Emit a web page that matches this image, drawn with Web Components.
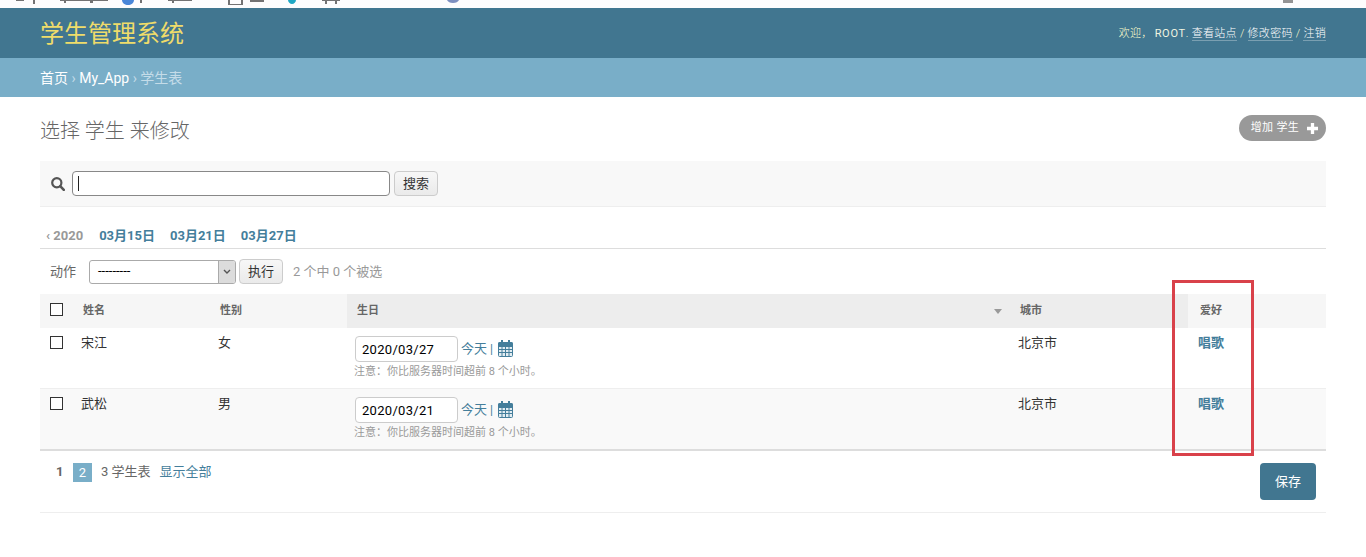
<!DOCTYPE html>
<html lang="zh">
<head>
<meta charset="utf-8">
<title>学生表</title>
<style>
  html, body { margin: 0; background: #fff; }
  body {
    font-family: Roboto, "Liberation Sans", "Noto Sans CJK SC", sans-serif;
    color: #333;
    font-size: 13px;
    height: 557px;
    overflow: hidden;
  }
</style>
</head>
<body>
<admin-page>
  <browser-strip></browser-strip>
  <admin-header title-text="学生管理系统"></admin-header>
  <admin-crumbs></admin-crumbs>
  <change-list></change-list>
</admin-page>

<script>
const CJK = 'Roboto, "Liberation Sans", "Noto Sans CJK SC", sans-serif';

class AdminPage extends HTMLElement {
  constructor() {
    super();
    this.attachShadow({ mode: 'open' }).innerHTML = `
      <style>
        :host { display: flex; flex-direction: column; position: relative; height: 557px; }
      </style>
      <slot></slot>
      <red-box></red-box>`;
  }
}

// the bottom edge of the browser's bookmarks bar, cut off by the screenshot: only specks are left
class BrowserStrip extends HTMLElement {
  constructor() {
    super();
    this.attachShadow({ mode: 'open' }).innerHTML = `
      <style>
        :host { display: block; height: 8px; background: #fdfcfd; }
        svg { display: block; }
      </style>
      <svg width="1366" height="8" viewBox="0 0 1366 8">
        <path d="M16 0H24V1H16ZM33 0H35V4H33ZM60 0H108V1H60ZM64 1H66V3H64ZM90 1H93V3H90ZM140 0H142V3H140ZM168 0H192V1H168ZM172 1H174V3H172ZM228 0H243V5H228ZM230 0H241V4H230ZM250 0H264V2H250ZM322 0H340V1H322ZM325 1H327V4H325ZM335 1H337V4H335Z" fill="#444" opacity=".75"/>
        <path d="M230 0H241V4H230Z" fill="#fdfcfd"/>
        <path d="M122 0H134C134 3 131 5 128 5C125 5 122 3 122 0Z" fill="#4a86d8"/>
        <path d="M288 0H296C296 2 294 4 292 4C290 4 288 2 288 0Z" fill="#1fa7c4"/>
        <path d="M447 0H459C458 2 456 3 453 3C450 3 448 2 447 0Z" fill="#7d8fc0"/>
        <path d="M1283 0H1293V3H1283Z" fill="#666" opacity=".7"/>
      </svg>`;
  }
}

class AdminHeader extends HTMLElement {
  constructor() {
    super();
    this.attachShadow({ mode: 'open' }).innerHTML = `
      <style>
        :host { display: flex; height: 50px; background: #417690; padding: 0 40px; justify-content: space-between; align-items: flex-start; box-sizing: border-box; }
        h1 { margin: 9px 0 0; font: 400 24px/34px ${CJK}; color: #efdc6a; }
        .tools { margin-top: 18px; font: 300 11px/16px ${CJK}; color: #ffc; letter-spacing: 0.3px; }
        .tools b { font-weight: 400; color: #f0f4e0; margin-left: 2px; letter-spacing: .7px; }
        a { color: #fff; text-decoration: none; border-bottom: 1px solid rgba(255,255,255,.3); }
      </style>
      <h1></h1>
      <div class="tools">欢迎，<b>ROOT</b>. <a>查看站点</a> / <a>修改密码</a> / <a>注销</a></div>`;
    this.shadowRoot.querySelector('h1').textContent = this.getAttribute('title-text');
  }
}

class AdminCrumbs extends HTMLElement {
  constructor() {
    super();
    this.attachShadow({ mode: 'open' }).innerHTML = `
      <style>
        :host { display: block; height: 39px; background: #79aec8; padding: 0 40px; font: 14px/40px ${CJK}; color: #c4dce8; box-sizing: border-box; white-space: nowrap; }
        a { color: #fff; }
      </style>
      <a>首页</a> › <a>My_App</a> › 学生表`;
  }
}

class RedBox extends HTMLElement {
  constructor() {
    super();
    this.attachShadow({ mode: 'open' }).innerHTML = `
      <style>
        :host { position: absolute; left: 1172px; top: 280px; width: 82px; height: 176px; border: 3px solid #d9414a; box-sizing: border-box; }
      </style>`;
  }
}

class DateField extends HTMLElement {
  constructor() {
    super();
    this.attachShadow({ mode: 'open' }).innerHTML = `
      <style>
        :host { display: block; font: 13px/16px ${CJK}; padding-top: 8px; }
        .row { display: flex; align-items: center; height: 26px; }
        .box { width: 103px; height: 26px; box-sizing: border-box; border: 1px solid #ccc; border-radius: 4px; padding: 0 6px; font: 13px/25px ${CJK}; color: #000; background: #fff; letter-spacing: 0.3px; }
        a { color: #447e9b; margin-left: 3px; font-size: 13px; }
        .bar { color: #447e9b; margin: 0 5px 0 3px; font-size: 12px; }
        svg { display: block; margin-top: -1px; }
        p { margin: 3px 0 0 -1px; font: 11px/14px ${CJK}; color: #999; white-space: nowrap; }
      </style>
      <div class="row">
        <div class="box"></div>
        <a>今天</a><span class="bar">|</span>
        <svg width="15" height="17" viewBox="0 0 15 17" fill="none" stroke="#447e9b">
          <rect x="0.5" y="2.5" width="14" height="14" rx="1" fill="#e3edf2"/>
          <path d="M0.5 6.5H14.5M0.5 9.5H14.5M0.5 12.5H14.5M4 6V16M7.5 6V16M11 6V16" stroke-width="1"/>
          <path d="M0.5 3.5Q0.5 2.5 1.5 2.5H13.5Q14.5 2.5 14.5 3.5V6H0.5Z" fill="#447e9b"/>
          <path d="M4 0V3.5M11 0V3.5" stroke-width="2"/>
        </svg>
      </div>
      <p>注意：你比服务器时间超前 8 个小时。</p>`;
    this.shadowRoot.querySelector('.box').textContent = this.getAttribute('value');
  }
}

class CheckMark extends HTMLElement {
  constructor() {
    super();
    this.attachShadow({ mode: 'open' }).innerHTML = `
      <style>
        :host { display: block; width: 13px; height: 13px; box-sizing: border-box; border: 1px solid #333; background: #fff; }
      </style>`;
  }
}

const template = document.createElement('template');
template.innerHTML = `
  <style>
    :host { display: block; padding: 0 40px; font: 13px/16px ${CJK}; }
    .title { display: flex; justify-content: space-between; align-items: flex-start; height: 64px; }
    h1 { margin: 21px 0 0; font: 300 20px/26px ${CJK}; color: #666; }
    .add { margin-top: 18px; height: 26px; border-radius: 13px; background: #999; color: #fff; font: 11px/26px ${CJK}; padding: 0 8px 0 12px; display: flex; align-items: center; gap: 8px; letter-spacing: .3px; }
    .search { background: #f8f8f8; border-bottom: 1px solid #eee; display: flex; align-items: center; padding-left: 11px; box-sizing: border-box; height: 46px; }
    .search svg { margin-right: 7px; }
    .q { width: 318px; height: 25px; box-sizing: border-box; border: 1px solid #888; border-radius: 4px; background: #fff; display: flex; align-items: center; padding-left: 5px; }
    .q i { width: 1px; height: 15px; background: #222; }
    .btn { height: 25px; box-sizing: border-box; border: 1px solid #ccc; border-radius: 4px; background: linear-gradient(#f7f7f7, #eaeaea); font: 13px/23px ${CJK}; color: #333; padding: 0 6px; text-align: center; }
    .search .btn { margin-left: 4px; width: 44px; padding: 0; }
    .dates { display: flex; height: 42px; box-sizing: border-box; border-bottom: 1px solid #ddd; padding: 22px 0 0 6px; font: 700 13px/14px ${CJK}; color: #447e9b; gap: 15px; }
    .dates span { color: #999; margin-right: 1px; }
    .actions { display: flex; align-items: center; height: 45px; padding: 0 10px; color: #666; box-sizing: border-box; }
    .sel { width: 147px; height: 24px; box-sizing: border-box; margin-left: 13px; border: 1px solid #aaa; border-radius: 3px; background: #fff; display: flex; justify-content: space-between; font: 13px/20px ${CJK}; color: #000; padding-left: 8px; overflow: hidden; }
    .sel u { width: 16px; background: #dcdcdc; border-left: 1px solid #aaa; display: flex; align-items: center; justify-content: center; text-decoration: none; }
    .actions .btn { margin-left: 3px; width: 44px; padding: 0; }
    .count { margin-left: 10px; color: #999; }
    .grid { display: grid; grid-template-columns: 31px 137px 139px 661px 180px 1fr; }
    .head { height: 34px; background: #f6f6f6; font: 700 11px/16px ${CJK}; color: #666; display: flex; align-items: center; padding-left: 12px; box-sizing: border-box; }
    .head.sorted { background: #ededed; padding-left: 10px; justify-content: space-between; }
    .head.city { background: #ededed; }
    .head.box { padding: 0 0 4px 10px; }
    .head.sorted i { width: 0; height: 0; border: 4px solid transparent; border-top: 5px solid #999; margin: 5px 6px 0 0; }
    .cell { height: 61px; box-sizing: border-box; padding: 7px 0 0 10px; border-bottom: 1px solid #eee; font: 13px/16px ${CJK}; color: #333; }
    .row2 { background: #f9f9f9; border-bottom: 2px solid #ddd; height: 62px; }
    .cell.box { padding-top: 8px; }
    .cell.date { padding: 0 0 0 8px; }
    .cell a { color: #447e9b; font-weight: 700; }
    .foot { display: flex; justify-content: space-between; height: 62px; box-sizing: border-box; border-bottom: 1px solid #eee; }
    .pages { display: flex; align-items: flex-start; padding: 11px 0 0 16px; color: #666; line-height: 20px; }
    .pages b { color: #666; font-weight: 700; width: 9px; }
    .pages .cur { width: 19px; height: 19px; background: #79aec8; color: #fff; text-align: center; margin: 1px 9px 0 8px; line-height: 19px; }
    .pages a { color: #447e9b; margin-left: 9px; }
    .save { margin: 12px 10px 0 0; width: 56px; height: 37px; border-radius: 4px; background: #417690; color: #fff; font: 13px/37px ${CJK}; text-align: center; }
  </style>
  <div class="title">
    <h1>选择 学生 来修改</h1>
    <div class="add">增加 学生
      <svg width="11" height="11" viewBox="0 0 10 10"><path d="M3.5 0H6.5V3.5H10V6.5H6.5V10H3.5V6.5H0V3.5H3.5Z" fill="#fff"/></svg>
    </div>
  </div>
  <div class="search">
    <svg width="14" height="14" viewBox="0 0 14 14" fill="none" stroke="#555">
      <circle cx="5.8" cy="5.8" r="4.6" stroke-width="2.2"/>
      <path d="M9.2 9.2L12.8 12.8" stroke-width="2.6" stroke-linecap="round"/>
    </svg>
    <div class="q"><i></i></div>
    <div class="btn">搜索</div>
  </div>
  <div class="dates"><span>‹ 2020</span><a>03月15日</a><a>03月21日</a><a>03月27日</a></div>
  <div class="actions">
    动作
    <div class="sel">---------<u><svg width="8" height="6" viewBox="0 0 8 6" fill="none" stroke="#555" stroke-width="1.4"><path d="M1 1L4 4L7 1"/></svg></u></div>
    <div class="btn">执行</div>
    <span class="count">2 个中 0 个被选</span>
  </div>
  <div class="grid" id="grid">
    <div class="head box"><check-mark></check-mark></div>
    <div class="head">姓名</div>
    <div class="head">性别</div>
    <div class="head sorted"><span>生日</span><i></i></div>
    <div class="head city">城市</div>
    <div class="head">爱好</div>
  </div>
  <div class="foot">
    <div class="pages"><b>1</b><span class="cur">2</span>3 学生表<a>显示全部</a></div>
    <div class="save">保存</div>
  </div>`;

class ChangeList extends HTMLElement {
  constructor() {
    super();
    const root = this.attachShadow({ mode: 'open' });
    root.appendChild(template.content.cloneNode(true));
    const rows = [
      { name: '宋江', sex: '女', date: '2020/03/27', city: '北京市', hobby: '唱歌' },
      { name: '武松', sex: '男', date: '2020/03/21', city: '北京市', hobby: '唱歌' },
    ];
    const grid = root.getElementById('grid');
    rows.forEach((r, i) => {
      const cls = i === 1 ? 'cell row2' : 'cell';
      grid.insertAdjacentHTML('beforeend', `
        <div class="${cls} box"><check-mark></check-mark></div>
        <div class="${cls} name">${r.name}</div>
        <div class="${cls}">${r.sex}</div>
        <div class="${cls} date"><date-field value="${r.date}"></date-field></div>
        <div class="${cls} city">${r.city}</div>
        <div class="${cls}"><a>${r.hobby}</a></div>`);
    });
  }
}

customElements.define('admin-page', AdminPage);
customElements.define('browser-strip', BrowserStrip);
customElements.define('admin-header', AdminHeader);
customElements.define('admin-crumbs', AdminCrumbs);
customElements.define('red-box', RedBox);
customElements.define('date-field', DateField);
customElements.define('check-mark', CheckMark);
customElements.define('change-list', ChangeList);
</script>
</body>
</html>
